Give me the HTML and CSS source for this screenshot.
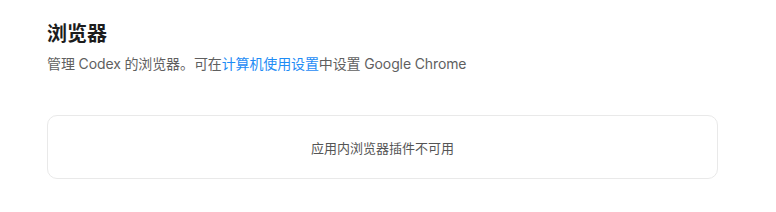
FILE: index.html
```html
<!DOCTYPE html>
<html lang="zh-CN">
<head>
    <meta charset="UTF-8" />
    <title>浏览器</title>
    <link rel="stylesheet" href="styles.css">
</head>
<body>
    <div class="settings-section">
        <h2 class="section-title">浏览器</h2>
        <p class="section-desc">管理 Codex 的浏览器。可在<a href="#" class="settings-link">计算机使用设置</a>中设置 Google Chrome</p>

        <div class="plugin-card">应用内浏览器插件不可用</div>
    </div>
</body>
</html>
```

FILE: styles.css
```css
body {
    margin: 0;
    background: #ffffff;
    font-family: Inter, "Noto Sans CJK SC", sans-serif;
    color: #1a1a1a;
}

.settings-section {
    padding: 20px 58px 0 47px;
}

.section-title {
    font-size: 20px;
    font-weight: 700;
    line-height: 28px;
    margin: 0 0 6px 0;
    color: #1c1c1c;
}

.section-desc {
    font-size: 14px;
    line-height: 20px;
    margin: 0 0 41px 0;
    color: #5f5f5f;
    letter-spacing: -0.12px;
}

.settings-link {
    color: #1e8cf5;
    text-decoration: none;
}

.plugin-card {
    height: 62px;
    border: 1px solid #e9e9e9;
    border-radius: 10px;
    display: flex;
    align-items: center;
    justify-content: center;
    font-size: 13px;
    color: #555555;
}
```
